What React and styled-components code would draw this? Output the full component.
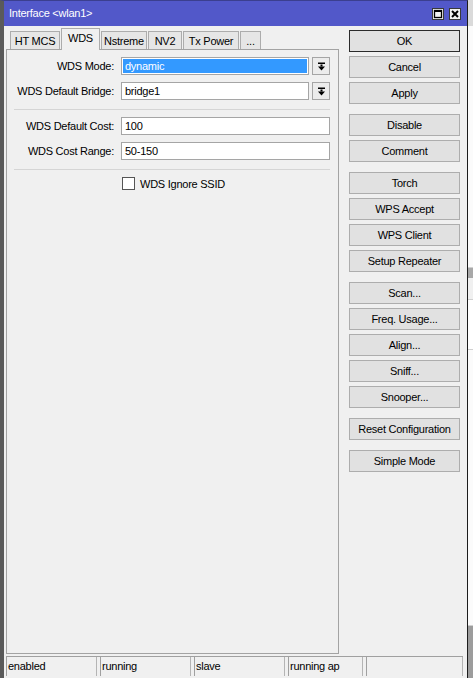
import React from 'react';
import styled, { createGlobalStyle } from 'styled-components';

const Global = createGlobalStyle`
  * { box-sizing: border-box; }
  html, body { margin: 0; padding: 0; height: 678px; overflow: hidden; background: #f0f0f0; }
  #root { height: 100%; }
  body {
    font-family: "Liberation Sans", Arial, sans-serif;
    font-size: 11px;
    letter-spacing: -0.25px;
    color: #000;
  }
`;

const Page = styled.div`
  display: flex;
  width: 473px;
  height: 678px;
`;

const Window = styled.div`
  width: 468px;
  height: 678px;
  display: flex;
  flex-direction: column;
  border-left: 4px solid #5a5a5a;
  border-right: 1px solid #1c1c1c;
  border-top: 1px solid #3b3f8f;
  background: #f0f0f0;
`;

const TitleBar = styled.div`
  height: 25px;
  flex: none;
  display: flex;
  align-items: center;
  padding: 0 6px 0 5px;
  background: #5258c9;
  color: #fff;
  font-size: 11px;
`;

const TitleText = styled.span`
  flex: 1;
  padding-bottom: 1px;
`;

const TitleButtons = styled.div`
  display: flex;
  gap: 5px;
  align-items: center;
`;

const TitleBtn = styled.div`
  width: 12px;
  height: 12px;
  display: flex;
`;

const Body = styled.div`
  flex: 1;
  display: flex;
  flex-direction: column;
  min-height: 0;
`;

const Main = styled.div`
  flex: 1;
  display: flex;
  min-height: 0;
`;

const LeftCol = styled.div`
  width: 333px;
  margin-left: 2px;
  padding-top: 2px;
  display: flex;
  flex-direction: column;
`;

const TabStrip = styled.div`
  height: 22px;
  display: flex;
  align-items: flex-end;
  padding-left: 4px;
  margin-bottom: -1px;
  position: relative;
  z-index: 1;
`;

const Tab = styled.div`
  width: ${(p) => p.$w}px;
  height: ${(p) => (p.$active ? 22 : 18)}px;
  margin-bottom: ${(p) => (p.$active ? 0 : 1)}px;
  margin-right: 1px;
  display: flex;
  align-items: center;
  justify-content: center;
  padding-bottom: ${(p) => (p.$active ? 3 : 0)}px;
  border: 1px solid #acacac;
  border-bottom: none;
  background: ${(p) => (p.$active ? '#f0f0f0' : '#e6e6e6')};
  white-space: nowrap;
`;

const Panel = styled.div`
  flex: 1;
  border: 1px solid #a3a3a3;
  padding: 7px 8px 0 0;
  display: flex;
  flex-direction: column;
`;

const FormGrid = styled.div`
  display: grid;
  grid-template-columns: 108px 1fr;
  column-gap: 6px;
  row-gap: 7px;
  align-items: center;
`;

const Label = styled.div`
  text-align: right;
  white-space: nowrap;
  margin-right: 1px;
`;

const FieldRow = styled.div`
  display: flex;
  gap: 3px;
`;

const Input = styled.div`
  flex: 1;
  height: 18px;
  border: 1px solid #a5a5a5;
  background: ${(p) => (p.$selected ? '#3399ff' : '#fff')};
  box-shadow: ${(p) => (p.$selected ? 'inset 0 0 0 1px #fff' : 'none')};
  color: ${(p) => (p.$selected ? '#fff' : '#000')};
  padding-left: 3px;
  line-height: 16px;
  white-space: nowrap;
`;

const DropBtn = styled.div`
  width: 18px;
  height: 18px;
  border: 1px solid #a5a5a5;
  background: #ececec;
  display: flex;
  align-items: center;
  justify-content: center;
`;

const Separator = styled.div`
  height: 1px;
  background: #d5d5d5;
  margin: 9px 0 7px 7px;
`;

const CheckRow = styled.div`
  display: flex;
  align-items: center;
  padding-left: 115px;
  height: 13px;
`;

const CheckBox = styled.div`
  width: 13px;
  height: 13px;
  border: 1px solid #555;
  background: #fff;
  margin-right: 5px;
`;

const RightCol = styled.div`
  width: 111px;
  margin-left: 10px;
  padding-top: 4px;
  display: flex;
  flex-direction: column;
`;

const Button = styled.div`
  height: 22px;
  flex: none;
  margin-top: ${(p) => (p.$group ? 10 : 4)}px;
  &:first-child { margin-top: 0; }
  border: 1px solid ${(p) => (p.$default ? '#2b2b2b' : '#adadad')};
  background: #e1e1e1;
  display: flex;
  align-items: center;
  justify-content: center;
  white-space: nowrap;
`;

const StatusBar = styled.div`
  height: 20px;
  margin: 2px 4px 2px 2px;
  display: flex;
  gap: 3px;
  border-top: 1px solid #a0a0a0;
`;

const StatusCell = styled.div`
  width: ${(p) => p.$w}px;
  border-left: 1px solid #a0a0a0;
  border-right: 1px solid #b4b4b4;
  padding-left: 1px;
  line-height: 18px;
  white-space: nowrap;
`;

const Behind = styled.div`
  flex: 1;
  display: flex;
  flex-direction: column;
  background: #f4f4f4;
`;

const BehindPart = styled.div`
  height: ${(p) => p.$h}px;
  flex: ${(p) => (p.$fill ? 1 : 'none')};
  background: ${(p) => p.$bg || 'transparent'};
  border-bottom: ${(p) => (p.$line ? '1px solid #d0d0d0' : 'none')};
`;

const DropIcon = () => (
  <svg width="9" height="9" viewBox="0 0 9 9">
    <rect x="1" y="0.5" width="7" height="1.5" fill="#000" />
    <rect x="3.5" y="2.5" width="2" height="2" fill="#000" />
    <path d="M1 4.5 H8 L4.5 8.5 Z" fill="#000" />
  </svg>
);

const MaxIcon = () => (
  <svg width="12" height="12" viewBox="0 0 12 12">
    <rect x="0.5" y="0.5" width="11" height="11" fill="#f2f2f2" stroke="#3a3a3a" />
    <rect x="2.5" y="2.5" width="7" height="7" fill="none" stroke="#000" strokeWidth="1.3" />
    <rect x="2" y="2" width="8" height="2" fill="#000" />
  </svg>
);

const CloseIcon = () => (
  <svg width="12" height="12" viewBox="0 0 12 12">
    <rect x="0.5" y="0.5" width="11" height="11" fill="#f2f2f2" stroke="#3a3a3a" />
    <path d="M3 3 L9 9 M9 3 L3 9" stroke="#000" strokeWidth="2" />
  </svg>
);

const tabs = [
  { t: 'HT MCS', w: 50 },
  { t: 'WDS', w: 39, active: true },
  { t: 'Nstreme', w: 46 },
  { t: 'NV2', w: 34 },
  { t: 'Tx Power', w: 56 },
  { t: '...', w: 21 },
];

const buttons = [
  { t: 'OK', def: true },
  { t: 'Cancel' },
  { t: 'Apply' },
  { t: 'Disable', g: true },
  { t: 'Comment' },
  { t: 'Torch', g: true },
  { t: 'WPS Accept' },
  { t: 'WPS Client' },
  { t: 'Setup Repeater' },
  { t: 'Scan...', g: true },
  { t: 'Freq. Usage...' },
  { t: 'Align...' },
  { t: 'Sniff...' },
  { t: 'Snooper...' },
  { t: 'Reset Configuration', g: true },
  { t: 'Simple Mode', g: true },
];

const status = [
  { t: 'enabled', w: 91 },
  { t: 'running', w: 91 },
  { t: 'slave', w: 91 },
  { t: 'running ap', w: 75 },
  { t: '', w: 97 },
];

export default function App() {
  return (
    <>
      <Global />
      <Page>
        <Window>
          <TitleBar>
            <TitleText>Interface &lt;wlan1&gt;</TitleText>
            <TitleButtons>
              <TitleBtn><MaxIcon /></TitleBtn>
              <TitleBtn><CloseIcon /></TitleBtn>
            </TitleButtons>
          </TitleBar>
          <Body>
            <Main>
              <LeftCol>
                <TabStrip>
                  {tabs.map((tb) => (
                    <Tab key={tb.t} $w={tb.w} $active={tb.active}>{tb.t}</Tab>
                  ))}
                </TabStrip>
                <Panel>
                  <FormGrid>
                    <Label>WDS Mode:</Label>
                    <FieldRow>
                      <Input $selected>dynamic</Input>
                      <DropBtn><DropIcon /></DropBtn>
                    </FieldRow>
                    <Label>WDS Default Bridge:</Label>
                    <FieldRow>
                      <Input>bridge1</Input>
                      <DropBtn><DropIcon /></DropBtn>
                    </FieldRow>
                  </FormGrid>
                  <Separator />
                  <FormGrid>
                    <Label>WDS Default Cost:</Label>
                    <FieldRow><Input>100</Input></FieldRow>
                    <Label>WDS Cost Range:</Label>
                    <FieldRow><Input>50-150</Input></FieldRow>
                  </FormGrid>
                  <Separator />
                  <CheckRow>
                    <CheckBox />
                    <span>WDS Ignore SSID</span>
                  </CheckRow>
                </Panel>
              </LeftCol>
              <RightCol>
                {buttons.map((b) => (
                  <Button key={b.t} $group={b.g} $default={b.def}>{b.t}</Button>
                ))}
              </RightCol>
            </Main>
            <StatusBar>
              {status.map((s, i) => (
                <StatusCell key={i} $w={s.w}>{s.t}</StatusCell>
              ))}
            </StatusBar>
          </Body>
        </Window>
        <Behind>
          <BehindPart $h={26} $bg="#dadada" />
          <BehindPart $h={242} $bg="#fbfbfb" $line />
          <BehindPart $h={10} $bg="#a8a8a8" />
          <BehindPart $h={22} $bg="#f0f0f0" $line />
          <BehindPart $h={50} $bg="#ffffff" $line />
          <BehindPart $h={276} $bg="#fbfbfb" $line />
          <BehindPart $fill $bg="#9c9c9c" />
        </Behind>
      </Page>
    </>
  );
}
